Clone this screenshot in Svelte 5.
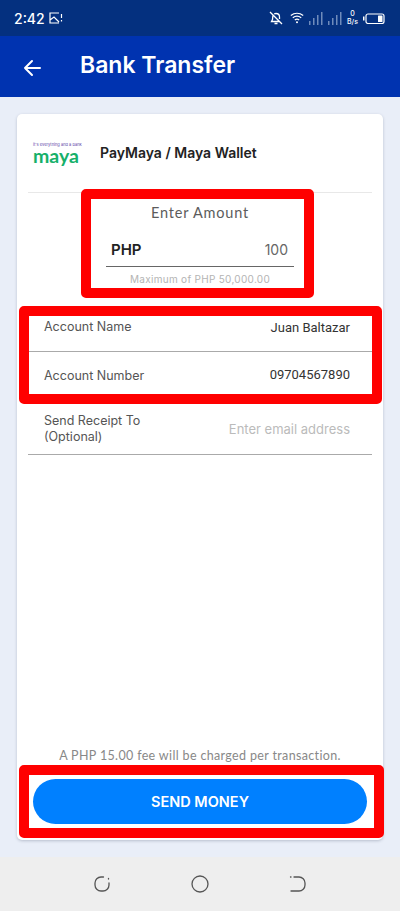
<script>
  const rows = [
    { label: 'Account Name', value: 'Juan Baltazar' },
    { label: 'Account Number', value: '09704567890' }
  ];
</script>

<div class="page">
  <div class="status">
    <span class="time">2:42</span>
    <svg class="shot" viewBox="0 0 14 12" fill="none" stroke="#fff" stroke-width="1.2">
      <path d="M10 1H1v10h9M1 8l4-3 5 5M7 1h3M12.5 2v4M12.5 8v1.5" />
    </svg>
    <span class="grow"></span>
    <svg class="bell" viewBox="0 0 14 14" fill="none" stroke="#fff" stroke-width="1.3">
      <path d="M1 1l12 12M4 4.500C3.700 5.500 3.700 7 3.500 8.500L2.500 10.500h8M10.500 8V6C10.500 3.800 9 2.500 7 2.500c-.7 0-1.300.2-1.800.5M5.500 12.500h3" />
    </svg>
    <svg class="wifi" viewBox="0 0 14 12" fill="none" stroke="#fff" stroke-width="1.2">
      <path d="M.8 3.500C4.500.6 9.500.6 13.200 3.500M2.800 5.800c2.600-2 5.800-2 8.400 0M4.800 8c1.400-1 3-1 4.400 0" />
      <circle cx="7" cy="10.300" r="1" fill="#fff" stroke="none" />
    </svg>
    <svg class="bars" viewBox="0 0 33 13" fill="#6f8bbb">
      <rect x="0" y="9" width="1.500" height="4" />
      <rect x="4" y="6" width="1.500" height="7" />
      <rect x="8" y="3" width="1.500" height="10" />
      <rect x="12" y="0" width="1.500" height="13" />
      <rect x="19" y="9" width="1.500" height="4" />
      <rect x="23" y="6" width="1.500" height="7" />
      <rect x="27" y="3" width="1.500" height="10" />
      <rect x="31" y="0" width="1.500" height="13" />
    </svg>
    <span class="speed">0<br />B/s</span>
    <svg class="battery" viewBox="0 0 22 11">
      <rect x="0" y="3.500" width="1.500" height="4" fill="#fff" />
      <rect x="3" y="1" width="18" height="9.500" rx="2" fill="none" stroke="#fff" stroke-width="1.200" />
      <rect x="15" y="2.500" width="4.500" height="6.500" rx="0.500" fill="#fff" />
    </svg>
  </div>

  <header class="bar">
    <svg class="back" viewBox="0 0 18 18" fill="none" stroke="#fff" stroke-width="2" stroke-linecap="round" stroke-linejoin="round">
      <path d="M17 9H2M9 2L2 9l7 7" />
    </svg>
    <h1>Bank Transfer</h1>
  </header>

  <main class="body">
    <section class="card">
      <div class="merchant">
        <div class="logo">
          <span class="tag">it's everything and a bank</span>
          <span class="maya">maya</span>
        </div>
        <span class="merchant-name">PayMaya / Maya Wallet</span>
      </div>

      <div class="amount">
        <div class="amount-title">Enter Amount</div>
        <div class="amount-input">
          <span class="currency">PHP</span>
          <span class="amount-value">100</span>
        </div>
        <div class="amount-hint">Maximum of PHP 50,000.00</div>
      </div>

      <div class="details">
        {#each rows as row}
          <div class="row">
            <span class="label">{row.label}</span>
            <span class="value">{row.value}</span>
          </div>
        {/each}
      </div>

      <div class="receipt">
        <span class="label">Send Receipt To<br />(Optional)</span>
        <span class="placeholder">Enter email address</span>
      </div>

      <div class="spacer"></div>

      <p class="fee">A PHP 15.00 fee will be charged per transaction.</p>
      <button type="button" class="send">SEND MONEY</button>
    </section>
  </main>

  <nav class="softkeys">
    <svg viewBox="0 0 18 18" fill="none" stroke="#555" stroke-width="1.300" stroke-linecap="round">
      <path d="M10.500 2H8a6 6 0 0 0-6 6v2a6 6 0 0 0 6 6h2a6 6 0 0 0 6-6V8M15.500 3.500v.5" />
    </svg>
    <svg viewBox="0 0 18 18" fill="none" stroke="#555" stroke-width="1.300">
      <circle cx="9" cy="9" r="8" />
    </svg>
    <svg viewBox="0 0 18 18" fill="none" stroke="#555" stroke-width="1.300" stroke-linecap="round">
      <path d="M5 2h5a6 6 0 0 1 6 6v2a6 6 0 0 1-6 6H2M1.500 2H2" />
    </svg>
  </nav>

  <div class="mark mark-amount"></div>
  <div class="mark mark-account"></div>
  <div class="mark mark-send"></div>
</div>

<style>
  :global(body) {
    margin: 0;
  }

  .page {
    position: relative;
    width: 400px;
    height: 911px;
    display: flex;
    flex-direction: column;
    overflow: hidden;
    background: #e9eef8;
    font-family: 'Inter', 'Liberation Sans', sans-serif;
    color: #333;
  }

  .status {
    height: 36px;
    flex-shrink: 0;
    display: flex;
    align-items: center;
    padding: 0 15px 0 14px;
    box-sizing: border-box;
    background: #04307f;
    color: #fff;
  }

  .time {
    font-size: 14px;
    font-weight: 500;
    width: 35px;
  }

  .shot {
    width: 14px;
    height: 12px;
  }

  .grow {
    flex: 1;
  }

  .bell {
    width: 14px;
    height: 14px;
    margin-right: 7px;
  }

  .wifi {
    width: 14px;
    height: 12px;
    margin-right: 5px;
  }

  .bars {
    width: 33px;
    height: 13px;
    margin-right: 4px;
  }

  .speed {
    width: 13px;
    font-size: 7px;
    line-height: 8px;
    text-align: center;
    font-weight: 500;
    margin-right: 4px;
  }

  .battery {
    width: 22px;
    height: 11px;
  }

  .bar {
    height: 61px;
    flex-shrink: 0;
    display: flex;
    align-items: center;
    padding-left: 23px;
    box-sizing: border-box;
    background: #0033b0;
  }

  .back {
    width: 18px;
    height: 18px;
    margin-top: 3px;
  }

  h1 {
    margin: 0 0 4px 39px;
    font-size: 23px;
    font-weight: 600;
    color: #fff;
  }

  .body {
    flex: 1;
    padding: 17px 17px 17px;
    display: flex;
    min-height: 0;
  }

  .card {
    flex: 1;
    display: flex;
    flex-direction: column;
    background: #fff;
    border-radius: 5px;
    box-shadow: 0 1px 3px rgba(40, 50, 80, 0.25);
    padding: 0 11px 16px;
  }

  .merchant {
    height: 78px;
    flex-shrink: 0;
    display: flex;
    align-items: center;
    border-bottom: 1px solid #e8e8e8;
  }

  .logo {
    width: 72px;
    padding-left: 5px;
    box-sizing: border-box;
    display: flex;
    flex-direction: column;
    gap: 1px;
  }

  .tag {
    font-size: 4px;
    line-height: 4px;
    color: #5b3fa8;
    white-space: nowrap;
  }

  .maya {
    font-family: 'Lato', sans-serif;
    font-size: 19.500px;
    line-height: 16px;
    font-weight: 700;
    color: #16b06a;
  }

  .merchant-name {
    font-size: 14px;
    font-weight: 600;
    color: #222;
    margin-bottom: 2px;
  }

  .amount {
    height: 101px;
    margin: 0 78px;
    flex-shrink: 0;
    display: flex;
    flex-direction: column;
    align-items: stretch;
    text-align: center;
  }

  .amount-title {
    margin-top: 11px;
    font-family: 'Lato', sans-serif;
    font-size: 14.500px;
    letter-spacing: 0.8px;
    line-height: 17px;
    color: #5c5c5c;
  }

  .amount-input {
    margin-top: 12px;
    height: 34px;
    display: flex;
    justify-content: space-between;
    align-items: center;
    padding: 0 6px 0 5px;
    box-sizing: border-box;
    border-bottom: 1px solid #666;
  }

  .currency {
    font-size: 15px;
    font-weight: 600;
    color: #222;
  }

  .amount-value {
    font-size: 14px;
    color: #666;
  }

  .amount-hint {
    margin-top: 6px;
    font-size: 10px;
    line-height: 12px;
    letter-spacing: 0.3px;
    color: #b4b4b4;
  }

  .details {
    flex-shrink: 0;
    margin-top: 8px;
  }

  .row {
    height: 46px;
    display: flex;
    justify-content: space-between;
    align-items: center;
    padding: 1px 22px 0 16px;
    box-sizing: border-box;
  }

  .row:first-child {
    height: 50px;
    border-bottom: 1px solid #aaa;
  }

  .row:last-child .value {
    margin-bottom: 2px;
  }

  .label {
    font-size: 12.500px;
    line-height: 16px;
    color: #555;
  }

  .value {
    font-family: 'Roboto', sans-serif;
    font-size: 13px;
    color: #333;
  }

  .receipt {
    height: 57px;
    flex-shrink: 0;
    display: flex;
    justify-content: space-between;
    align-items: center;
    padding: 5px 22px 0 16px;
    box-sizing: border-box;
    border-bottom: 1px solid #aaa;
  }

  .placeholder {
    font-size: 13px;
    color: #bbb;
  }

  .spacer {
    flex: 1;
  }

  .fee {
    margin: 0 0 15px;
    text-align: center;
    font-family: 'Lato', sans-serif;
    font-size: 12.500px;
    line-height: 16px;
    letter-spacing: 0.35px;
    color: #888;
  }

  .send {
    height: 45px;
    margin: 0 5px;
    border: none;
    border-radius: 23px;
    background: #0080ff;
    color: #fff;
    font-family: inherit;
    font-size: 14.500px;
    font-weight: 600;
  }

  .softkeys {
    height: 54px;
    flex-shrink: 0;
    display: flex;
    justify-content: center;
    align-items: center;
    gap: 80px;
    background: #eeeeee;
  }

  .softkeys svg {
    width: 18px;
    height: 18px;
  }

  /* red annotation boxes drawn over the screenshot */
  .mark {
    position: absolute;
    box-sizing: border-box;
    border: 10px solid #ff0000;
    border-radius: 5px;
  }

  .mark-amount {
    left: 81px;
    top: 189px;
    width: 233px;
    height: 109px;
  }

  .mark-account {
    left: 19px;
    top: 306px;
    width: 363px;
    height: 98px;
  }

  .mark-send {
    left: 19px;
    top: 765px;
    width: 365px;
    height: 73px;
  }
</style>
